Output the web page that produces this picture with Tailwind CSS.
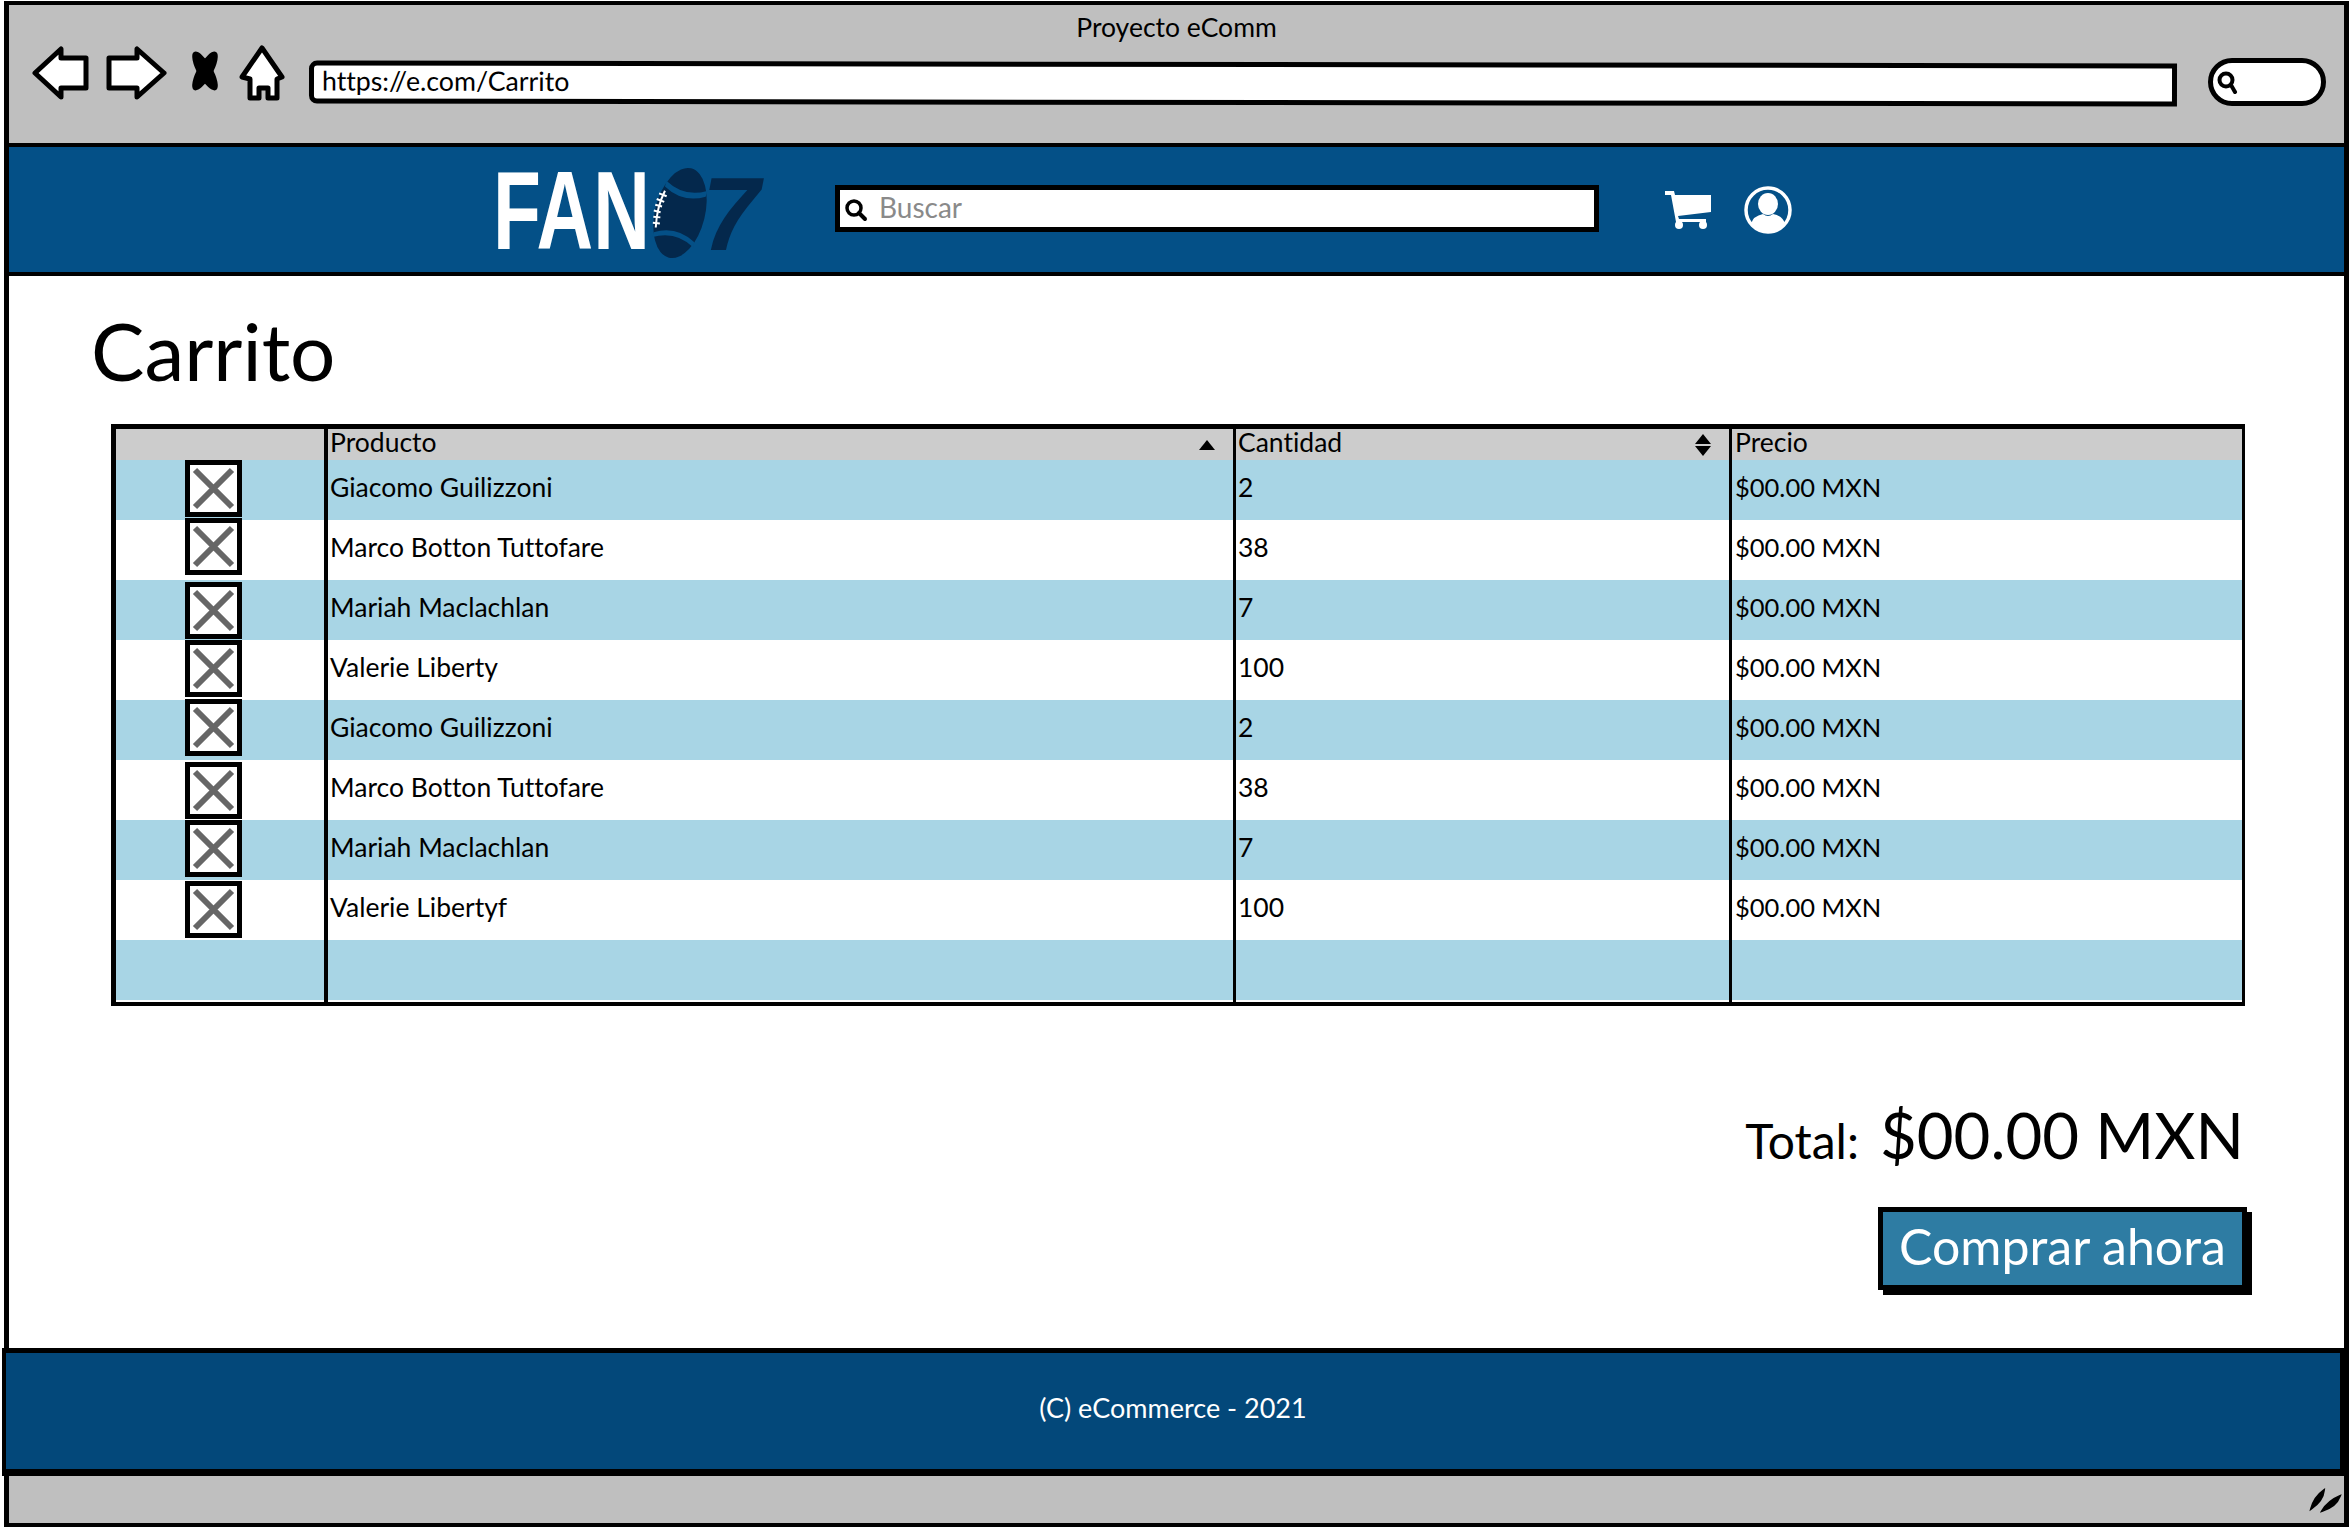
<!DOCTYPE html>
<html lang="es">

<head>
    <meta charset="UTF-8">
    <title>Proyecto eComm</title>
    <script src="https://cdn.jsdelivr.net/npm/@tailwindcss/browser@4"></script>
</head>

<body class="bg-white font-[Lato,sans-serif] [font-variant-ligatures:none] text-black w-[2352px] h-[1528px] overflow-hidden">
    <div class="ml-[4px] mt-[1px] w-[2345px] h-[1526px] border-x-[5px] border-t-[4px] border-b-[4px] border-black flex flex-col">

        <!-- browser chrome -->
        <div class="h-[142px] shrink-0 bg-[#bfbfbf] border-b-[4px] border-black">
            <p class="pt-[7px] text-center text-[26.5px] leading-[30px]">Proyecto eComm</p>
            <div class="mt-[6px] flex items-center h-[50px] pl-[23px]">
                <svg class="w-[58px] h-[54px]" viewBox="0 0 58 54">
                    <path d="M3 27 L29 3 L29 12 L54 12 L54 42 L29 42 L29 51 Z" fill="#fff" stroke="#000" stroke-width="5" stroke-linejoin="round" />
                </svg>
                <svg class="ml-[15px] w-[62px] h-[54px]" viewBox="0 0 62 54">
                    <path d="M59 27 L32 3 L32 12 L4 12 L4 42 L32 42 L32 51 Z" fill="#fff" stroke="#000" stroke-width="5" stroke-linejoin="round" />
                </svg>
                <svg class="ml-[21px] mb-[4px] w-[34px] h-[40px] overflow-visible" viewBox="0 0 34 40">
                    <ellipse cx="17" cy="20" rx="7.5" ry="22" transform="rotate(-30 17 20)" />
                    <ellipse cx="17" cy="20" rx="7.5" ry="22" transform="rotate(30 17 20)" />
                </svg>
                <svg class="ml-[17px] w-[46px] h-[56px]" viewBox="0 0 46 56">
                    <path d="M23 3 L43 32 L38 34 L38 53 L29 53 L29 43 L20 43 L20 53 L11 53 L11 34 L3 32 Z" fill="#fff" stroke="#000" stroke-width="5" stroke-linejoin="round" />
                </svg>
                <div class="ml-[24px] w-[1868px] h-[43px] mt-[20px] rotate-[0.09deg] bg-white border-[5px] border-black rounded-l-[8px] flex items-center pl-[8px] text-[26.7px]"><span class="mb-[3px]">https://e.com/Carrito</span></div>
                <div class="ml-[31px] w-[118px] h-[48px] mt-[17px] bg-white border-[5px] border-black rounded-[24px] flex items-center pl-[3px]">
                    <svg class="w-[24px] h-[24px]" viewBox="0 0 24 24">
                        <circle cx="10" cy="10" r="6.5" fill="none" stroke="#000" stroke-width="4" />
                        <path d="M15 15 L19 22" stroke="#000" stroke-width="4" stroke-linecap="round" />
                    </svg>
                </div>
            </div>
        </div>

        <!-- site header -->
        <header class="h-[129px] shrink-0 bg-[#045087] border-b-[4px] border-black flex items-center pl-[484px]">
            <div class="w-[270px] h-[100px] mt-[6px] flex items-start">
                <span class="w-[230px] mr-[-78px] mt-[-2px] origin-left scale-x-[0.7] font-['Liberation_Sans'] font-bold text-[112px] leading-[100px] text-white">FAN</span>
                <svg class="ml-[2px] w-[60px] h-[100px] overflow-visible" viewBox="154 0 60 100">
                    <g transform="rotate(14 187 50)">
                        <ellipse cx="187" cy="50" rx="25" ry="46" fill="#04284c" />
                        <path d="M166 22 Q187 34 208 22 L208 28 Q187 40 166 28 Z" fill="#045087" />
                        <path d="M166 80 Q187 68 208 80 L208 75 Q187 63 166 75 Z" fill="#045087" />
                        <path d="M167 32 Q163 50 167 70" fill="none" stroke="#fff" stroke-width="2" />
                        <path d="M162 36 L170 37 M161 42 L169 43 M161 48 L168 48 M161 54 L168 54 M162 60 L169 59 M163 66 L170 65" stroke="#fff" stroke-width="2" />
                    </g>
                </svg>
                <span class="ml-[-5px] mt-[1px] font-['Liberation_Sans'] font-bold italic text-[104px] leading-[100px] text-[#04284c]">7</span>
            </div>
            <div class="ml-[72px] w-[764px] h-[47px] mt-[-2px] bg-white border-[5px] border-black flex items-center pl-[4px] text-[28px] text-[#8a8a8a]">
                <svg class="w-[24px] h-[24px] mr-[11px] mt-[3px]" viewBox="0 0 24 24">
                    <circle cx="10" cy="10" r="7" fill="none" stroke="#000" stroke-width="3.5" />
                    <path d="M15 15 L21 21" stroke="#000" stroke-width="4" stroke-linecap="round" />
                </svg>
                <span class="mb-[3px]">Buscar</span>
            </div>
            <svg class="ml-[66px] w-[46px] h-[38px]" viewBox="0 0 46 38">
                <path d="M0 0 H9 L10 4 H46 V21 L13 25 L14 28 H41 V31 H11 L6 4 H0 Z" fill="#fff" />
                <circle cx="14" cy="34" r="4" fill="#fff" />
                <circle cx="38" cy="34" r="4" fill="#fff" />
            </svg>
            <svg class="ml-[33px] w-[48px] h-[48px]" viewBox="0 0 48 48">
                <circle cx="24" cy="24" r="22" fill="none" stroke="#fff" stroke-width="3.5" />
                <ellipse cx="24" cy="18" rx="10" ry="11" fill="#fff" />
                <path d="M7 38 Q9 30 19 28 Q24 32 29 28 Q39 30 41 38 Q33 46 24 46 Q15 46 7 38 Z" fill="#fff" />
            </svg>
        </header>

        <!-- page content -->
        <main class="flex-1 bg-white pl-[83px] flex flex-col">
            <h1 class="mt-[29px] text-[80px] leading-[90px] ml-[-1px]">Carrito</h1>
            <div class="mt-[29px] ml-[19px] w-[2134px] bg-white border-l-[5px] border-t-[5px] border-r-[3px] border-b-[4px] border-black text-[26.5px]">
                <table class="w-[2126px] table-fixed border-separate border-spacing-0">
                    <colgroup>
                        <col class="w-[208px]">
                        <col class="w-[909px]">
                        <col class="w-[496px]">
                        <col class="w-[513px]">
                    </colgroup>
                    <thead>
                        <tr class="h-[31px] bg-[#cccccc] leading-[26px] text-left font-normal">
                            <th class="font-normal"></th>
                            <th class="font-normal border-l-[4px] border-black pl-[2px]">
                                <div class="flex items-center justify-between pr-[18px]"><span class="mb-[5px]">Producto</span>
                                    <svg class="w-[16px] h-[10px]" viewBox="0 0 16 10"><path d="M8 0 L16 10 H0 Z" /></svg>
                                </div>
                            </th>
                            <th class="font-normal border-l-[3px] border-black pl-[2px]">
                                <div class="flex items-center justify-between pr-[18px]"><span class="mb-[5px]">Cantidad</span>
                                    <svg class="w-[16px] h-[22px]" viewBox="0 0 16 22"><path d="M8 0 L16 10 H0 Z M0 12 H16 L8 22 Z" /></svg>
                                </div>
                            </th>
                            <th class="font-normal border-l-[3px] border-black pl-[3px] pb-[5px]">Precio</th>
                        </tr>
                    </thead>
                    <tbody>
                        <tr class="h-[60px] bg-[#a8d5e5]">
                            <td class="align-top"><div class="mt-[0px] ml-[69px] w-[57px] h-[57px] bg-white border-[5px] border-black"><svg class="w-full h-full" viewBox="0 0 47 47"><path d="M5 5 L42 42 M42 5 L5 42" stroke="#666" stroke-width="6" /></svg></div></td>
                            <td class="border-l-[4px] border-black pl-[2px] pb-[5px]">Giacomo Guilizzoni</td>
                            <td class="border-l-[3px] border-black pl-[2px] pb-[5px]">2</td>
                            <td class="border-l-[3px] border-black pl-[3px] pb-[5px] text-[25.5px]">$00.00 MXN</td>
                        </tr>
                        <tr class="h-[60px] bg-white">
                            <td class="align-top"><div class="mt-[-2px] ml-[69px] w-[57px] h-[57px] bg-white border-[5px] border-black"><svg class="w-full h-full" viewBox="0 0 47 47"><path d="M5 5 L42 42 M42 5 L5 42" stroke="#666" stroke-width="6" /></svg></div></td>
                            <td class="border-l-[4px] border-black pl-[2px] pb-[5px]">Marco Botton Tuttofare</td>
                            <td class="border-l-[3px] border-black pl-[2px] pb-[5px]">38</td>
                            <td class="border-l-[3px] border-black pl-[3px] pb-[5px] text-[25.5px]">$00.00 MXN</td>
                        </tr>
                        <tr class="h-[60px] bg-[#a8d5e5]">
                            <td class="align-top"><div class="mt-[2px] ml-[69px] w-[57px] h-[57px] bg-white border-[5px] border-black"><svg class="w-full h-full" viewBox="0 0 47 47"><path d="M5 5 L42 42 M42 5 L5 42" stroke="#666" stroke-width="6" /></svg></div></td>
                            <td class="border-l-[4px] border-black pl-[2px] pb-[5px]">Mariah Maclachlan</td>
                            <td class="border-l-[3px] border-black pl-[2px] pb-[5px]">7</td>
                            <td class="border-l-[3px] border-black pl-[3px] pb-[5px] text-[25.5px]">$00.00 MXN</td>
                        </tr>
                        <tr class="h-[60px] bg-white">
                            <td class="align-top"><div class="mt-[0px] ml-[69px] w-[57px] h-[57px] bg-white border-[5px] border-black"><svg class="w-full h-full" viewBox="0 0 47 47"><path d="M5 5 L42 42 M42 5 L5 42" stroke="#666" stroke-width="6" /></svg></div></td>
                            <td class="border-l-[4px] border-black pl-[2px] pb-[5px]">Valerie Liberty</td>
                            <td class="border-l-[3px] border-black pl-[2px] pb-[5px]">100</td>
                            <td class="border-l-[3px] border-black pl-[3px] pb-[5px] text-[25.5px]">$00.00 MXN</td>
                        </tr>
                        <tr class="h-[60px] bg-[#a8d5e5]">
                            <td class="align-top"><div class="mt-[-1px] ml-[69px] w-[57px] h-[57px] bg-white border-[5px] border-black"><svg class="w-full h-full" viewBox="0 0 47 47"><path d="M5 5 L42 42 M42 5 L5 42" stroke="#666" stroke-width="6" /></svg></div></td>
                            <td class="border-l-[4px] border-black pl-[2px] pb-[5px]">Giacomo Guilizzoni</td>
                            <td class="border-l-[3px] border-black pl-[2px] pb-[5px]">2</td>
                            <td class="border-l-[3px] border-black pl-[3px] pb-[5px] text-[25.5px]">$00.00 MXN</td>
                        </tr>
                        <tr class="h-[60px] bg-white">
                            <td class="align-top"><div class="mt-[2px] ml-[69px] w-[57px] h-[57px] bg-white border-[5px] border-black"><svg class="w-full h-full" viewBox="0 0 47 47"><path d="M5 5 L42 42 M42 5 L5 42" stroke="#666" stroke-width="6" /></svg></div></td>
                            <td class="border-l-[4px] border-black pl-[2px] pb-[5px]">Marco Botton Tuttofare</td>
                            <td class="border-l-[3px] border-black pl-[2px] pb-[5px]">38</td>
                            <td class="border-l-[3px] border-black pl-[3px] pb-[5px] text-[25.5px]">$00.00 MXN</td>
                        </tr>
                        <tr class="h-[60px] bg-[#a8d5e5]">
                            <td class="align-top"><div class="mt-[0px] ml-[69px] w-[57px] h-[57px] bg-white border-[5px] border-black"><svg class="w-full h-full" viewBox="0 0 47 47"><path d="M5 5 L42 42 M42 5 L5 42" stroke="#666" stroke-width="6" /></svg></div></td>
                            <td class="border-l-[4px] border-black pl-[2px] pb-[5px]">Mariah Maclachlan</td>
                            <td class="border-l-[3px] border-black pl-[2px] pb-[5px]">7</td>
                            <td class="border-l-[3px] border-black pl-[3px] pb-[5px] text-[25.5px]">$00.00 MXN</td>
                        </tr>
                        <tr class="h-[60px] bg-white">
                            <td class="align-top"><div class="mt-[1px] ml-[69px] w-[57px] h-[57px] bg-white border-[5px] border-black"><svg class="w-full h-full" viewBox="0 0 47 47"><path d="M5 5 L42 42 M42 5 L5 42" stroke="#666" stroke-width="6" /></svg></div></td>
                            <td class="border-l-[4px] border-black pl-[2px] pb-[5px]">Valerie Libertyf</td>
                            <td class="border-l-[3px] border-black pl-[2px] pb-[5px]">100</td>
                            <td class="border-l-[3px] border-black pl-[3px] pb-[5px] text-[25.5px]">$00.00 MXN</td>
                        </tr>
                        <tr class="h-[62px] bg-white">
                            <td class="align-top"><div class="h-[60px] bg-[#a8d5e5]"></div></td>
                            <td class="align-top border-l-[4px] border-black"><div class="h-[60px] bg-[#a8d5e5]"></div></td>
                            <td class="align-top border-l-[3px] border-black"><div class="h-[60px] bg-[#a8d5e5]"></div></td>
                            <td class="align-top border-l-[3px] border-black"><div class="h-[60px] bg-[#a8d5e5]"></div></td>
                        </tr>
                    </tbody>
                </table>
            </div>

            <div class="mt-[89px] w-[2152px] flex justify-end items-baseline">
                <span class="text-[48px] leading-[60px] mr-[-1px]">Total:</span>
                <span class="ml-[22px] text-[63.5px] leading-[80px]">$00.00 MXN</span>
            </div>
            <div class="mt-[32px] w-[2155px] flex justify-end">
                <button class="w-[369px] h-[83px] pb-[6px] bg-[#2e7ca3] border-[5px] border-black shadow-[5px_5px_0_#000] text-white text-[50px] leading-none">Comprar ahora</button>
            </div>
        </main>

        <!-- site footer -->
        <footer class="ml-[-7px] h-[128px] shrink-0 bg-[#03487a] border-x-[4px] border-t-[5px] border-b-[7px] border-black flex items-center justify-center text-white text-[27px]"><span class="mb-[5px]">(C) eCommerce - 2021</span></footer>

        <!-- status bar -->
        <div class="h-[47px] shrink-0 bg-[#bfbfbf] flex items-center justify-end pr-[2px]">
            <svg class="w-[34px] h-[26px]" viewBox="0 0 34 26">
                <path d="M3 22 Q6 10 16 3 Q15 14 3 22 Z M14 24 Q20 14 32 9 Q28 20 14 24 Z" stroke="#000" stroke-width="2" />
            </svg>
        </div>
    </div>
</body>

</html>
